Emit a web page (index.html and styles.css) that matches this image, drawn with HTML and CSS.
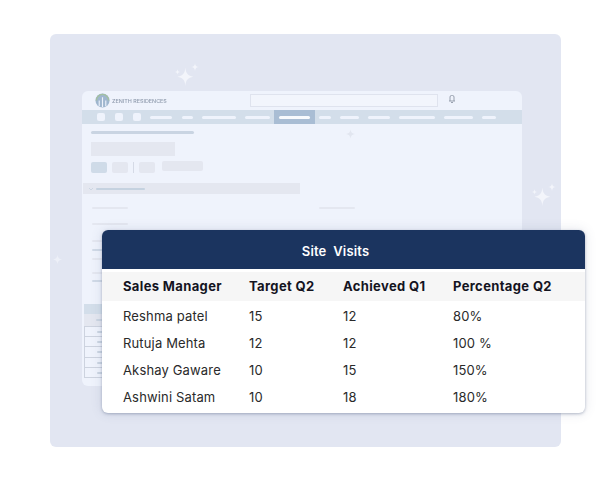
FILE: index.html
```html
<!DOCTYPE html>
<html lang="en">
<head>
<meta charset="utf-8">
<title>Site Visits</title>
<link rel="stylesheet" href="styles.css">
</head>
<body>
<main class="panel">
  <svg class="spark spark-a" viewBox="0 0 32 26"><use href="#sparks"/></svg>
  <svg class="spark spark-b" viewBox="0 0 32 26"><use href="#sparks"/></svg>
  <svg class="star star-mid" viewBox="0 0 20 20"><use href="#star"/></svg>
  <svg class="star star-left" viewBox="0 0 20 20"><use href="#star"/></svg>

  <section class="window">
    <header class="topbar">
      <div class="brand">
        <svg class="logo" viewBox="0 0 16 16">
          <circle cx="8" cy="8" r="7.500" fill="#9fb6cf"/>
          <path d="M1.500 8a6.500 6.500 0 0 1 13 0" fill="none" stroke="#a3c0a0" stroke-width="1.500"/>
          <path d="M4.500 14V8M8 15V4.500M11.500 14V8" stroke="#eef2fb" stroke-width="1.200"/>
        </svg>
        <span class="brand-name">ZENITH RESIDENCES</span>
      </div>
      <div class="search"></div>
      <svg class="bell" viewBox="0 0 8 8"><path d="M2 6V2a1.500 1.500 0 0 1 1.500-1.500h1A1.500 1.500 0 0 1 6 2v4M1 6h6M3 7.500h2" fill="none" stroke="#8f97a6" stroke-width=".9"/></svg>
    </header>
    <nav class="nav">
      <i class="sq"></i><i class="sq"></i><i class="sq"></i>
      <i class="ln w22 nudge"></i><i class="ln w11"></i><i class="ln w34"></i><i class="ln w25"></i>
      <span class="active"><i class="ln w31"></i></span>
      <i class="ln w12"></i><i class="ln w19"></i><i class="ln w22"></i><i class="ln w36"></i><i class="ln w29"></i><i class="ln w14"></i>
    </nav>
    <div class="content">
      <div class="crumb"></div>
      <div class="title-block"></div>
      <div class="tools">
        <i class="tool tool-on"></i><i class="tool"></i><i class="divider"></i><i class="tool"></i><i class="tool tool-wide"></i>
      </div>
      <div class="accordion">
        <svg class="chev" viewBox="0 0 6 4"><path d="M1 1l2 2 2-2" fill="none" stroke="#c5d2e0" stroke-width=".8"/></svg>
        <i class="acc-line"></i>
      </div>
      <div class="fields">
        <div class="field-col">
          <i class="f"></i><i class="f gap16"></i><i class="f gap15"></i><i class="f dark gap7"></i><i class="f gap7"></i><i class="f gap12"></i><i class="f dark gap6"></i>
        </div>
        <div class="field-col"><i class="f"></i></div>
      </div>
      <div class="mini-table">
        <div class="mini-head"></div>
        <div class="mini-sub"><i class="cell"></i></div>
        <div class="mini-row"><i class="cell"></i></div>
        <div class="mini-row"><i class="cell"></i></div>
        <div class="mini-row"><i class="cell"></i></div>
        <div class="mini-row"><i class="cell"></i></div>
        <div class="mini-row"><i class="cell"></i></div>
      </div>
    </div>
  </section>

  <section class="card">
    <h1 class="card-title">Site&nbsp; Visits</h1>
    <table class="data">
      <thead>
        <tr><th>Sales Manager</th><th>Target Q2</th><th>Achieved Q1</th><th>Percentage Q2</th></tr>
      </thead>
      <tbody>
        <tr><td>Reshma patel</td><td>15</td><td>12</td><td>80%</td></tr>
        <tr><td>Rutuja Mehta</td><td>12</td><td>12</td><td>100 %</td></tr>
        <tr><td>Akshay Gaware</td><td>10</td><td>15</td><td>150%</td></tr>
        <tr><td>Ashwini Satam</td><td>10</td><td>18</td><td>180%</td></tr>
      </tbody>
    </table>
  </section>
</main>
<svg class="defs" width="0" height="0">
  <defs>
    <path id="star" d="M10 0C10.6 6 14 9.4 20 10 14 10.6 10.6 14 10 20 9.4 14 6 10.6 0 10 6 9.4 9.4 6 10 0Z" fill="currentColor"/>
    <g id="sparks" fill="currentColor">
      <path d="M13 5C13.6 12 16 14.5 22 15.5 16 16.5 13.6 19 13 26 12.4 19 10 16.5 4 15.5 10 14.500 12.400 12 13 5Z"/>
      <path d="M24 0C24.300 3 25.500 4.200 28.500 4.500 25.500 4.800 24.300 6 24 9 23.700 6 22.500 4.800 19.500 4.500 22.500 4.200 23.700 3 24 0Z"/>
      <path d="M4 7C4.200 9 5 9.800 7 10 5 10.200 4.200 11 4 13 3.800 11 3 10.200 1 10 3 9.800 3.800 9 4 7Z"/>
    </g>
  </defs>
</svg>
</body>
</html>
```
FILE: styles.css
```css
* { box-sizing: border-box; }
html, body { margin: 0; padding: 0; background: #fff; }
body { width: 606px; height: 483px; padding: 34px 0 0 50px; font-family: "Inter", "Open Sans", sans-serif; overflow: hidden; }
i { display: block; }
.defs { position: absolute; }

.panel { position: relative; width: 511px; height: 413px; padding: 57px 39px 0 32px; background: #e2e6f2; border-radius: 6px; }

.spark, .star { position: absolute; color: #f3f5fb; }
.spark { width: 28px; height: 23px; }
.spark-a { left: 124px; top: 29px; }
.spark-b { left: 481px; top: 149px; }
.star { width: 9px; height: 9px; }
.star-mid { left: 296px; top: 95px; color: #e2e6f0; width: 9px; height: 10px; z-index: 1; }
.star-left { left: 3px; top: 221px; color: #edf0f8; }

.window { width: 440px; height: 295px; background: #eff3fc; border-radius: 6px; overflow: hidden; filter: blur(.6px); }
.topbar { display: flex; align-items: center; height: 19px; padding-left: 13px; }
.brand { display: flex; align-items: center; gap: 2px; width: 155px; }
.logo { width: 15px; height: 15px; }
.brand-name { font-size: 5.400px; color: #8f9bad; white-space: nowrap; font-weight: 500; }
.search { width: 188px; height: 13px; border: 1px solid #dfe3ee; background: #f2f5fc; }
.bell { width: 8px; height: 8px; margin: -3px 0 0 10px; }

.nav { display: flex; align-items: center; height: 14px; padding-left: 15px; background: #d3deea; }
.sq { width: 8px; height: 8px; margin-right: 10px; background: #eff3fc; border-radius: 2px; }
.ln { height: 3px; background: #eff3fc; border-radius: 2px; margin-right: 9px; }
.w11 { width: 11px; } .w12 { width: 12px; } .w14 { width: 14px; } .w19 { width: 19px; } .w22 { width: 22px; }
.w25 { width: 25px; } .w29 { width: 29px; } .w31 { width: 31px; } .w34 { width: 34px; } .w36 { width: 36px; }
.nudge { margin-left: -1px; margin-right: 10px; }
.active { display: flex; align-items: center; height: 14px; width: 41px; margin-left: -5px; margin-right: 4px; padding-left: 5px; background: #a9bdd4; }
.active .ln { margin: 0; background: #f8fafd; }

.content { padding: 7px 0 0 9px; }
.crumb { width: 103px; height: 3px; background: #c9d4e2; border-radius: 2px; }
.title-block { width: 84px; height: 14px; margin-top: 8px; background: #e4e7f0; }
.tools { display: flex; align-items: flex-start; gap: 5px; margin-top: 6px; height: 11px; }
.tool { width: 16px; height: 11px; background: #e4e7f0; border-radius: 2px; }
.tool-on { background: #cfdbe8; }
.divider { width: 1px; height: 11px; background: #d5dae6; }
.tool-wide { width: 41px; height: 10px; margin-left: 2px; margin-top: -1px; }
.accordion { display: flex; align-items: center; width: 217px; height: 11px; margin: 10px 0 0 -8px; padding-left: 5px; gap: 2px; background: #e4e7f0; }
.chev { width: 6px; height: 4px; }
.acc-line { width: 49px; height: 2px; background: #c5d2e0; border-radius: 1px; }

.fields { display: flex; height: 110px; padding: 13px 0 0 1px; }
.field-col { width: 227px; }
.field-col:first-child { width: 227px; flex: none; margin-right: 0; }
.field-col:last-child { padding-left: 0; }
.f { width: 36px; height: 2px; background: #e4e7f0; border-radius: 1px; }
.gap16 { margin-top: 14px; } .gap15 { margin-top: 15px; } .gap7 { margin-top: 7px; } .gap12 { margin-top: 12px; } .gap6 { margin-top: 6px; }
.dark { background: #d0dae7; }

.mini-table { width: 100px; margin-left: -7px; }
.mini-head { height: 10px; background: #d3deea; }
.mini-sub { height: 12px; padding-top: 5px; background: #e4e7f0; }
.mini-row { height: 10.300px; padding-top: 4px; border: 1px solid #cdd3df; border-top-width: 0; border-right: 0; border-bottom-width: 1px; }
.mini-sub + .mini-row { border-top-width: 1px; height: 11px; }
.cell { width: 8px; height: 2px; margin-left: 12px; background: #cbd5e2; border-radius: 1px; }

.card { position: absolute; left: 52px; top: 196px; width: 483px; height: 183px; background: #fff; border-radius: 6px; overflow: hidden; box-shadow: 0 1px 3px rgba(80, 95, 130, .4), 0 0 12px rgba(80, 95, 130, .16); }
.card-title { height: 39px; margin: 0; padding-right: 16px; background: #1b345f; color: #fff; font-size: 13px; font-weight: 600; letter-spacing: .15px; line-height: 43px; text-align: center; }
.data { width: 100%; margin-top: 3px; border-collapse: collapse; table-layout: fixed; font-size: 13px; color: #2a2a2a; letter-spacing: .15px; }
.data th:nth-child(1), .data td:nth-child(1) { width: 147px; padding-left: 21px; }
.data th:nth-child(2), .data td:nth-child(2) { width: 94px; }
.data th:nth-child(3), .data td:nth-child(3) { width: 110px; }
.data th { height: 29px; padding: 0 0 2px; background: #f6f6f6; font-weight: 700; letter-spacing: .36px; text-align: left; color: #14141f; white-space: nowrap; }
.data td { height: 27px; padding: 3px 0 0; font-weight: 400; white-space: nowrap; }
```
